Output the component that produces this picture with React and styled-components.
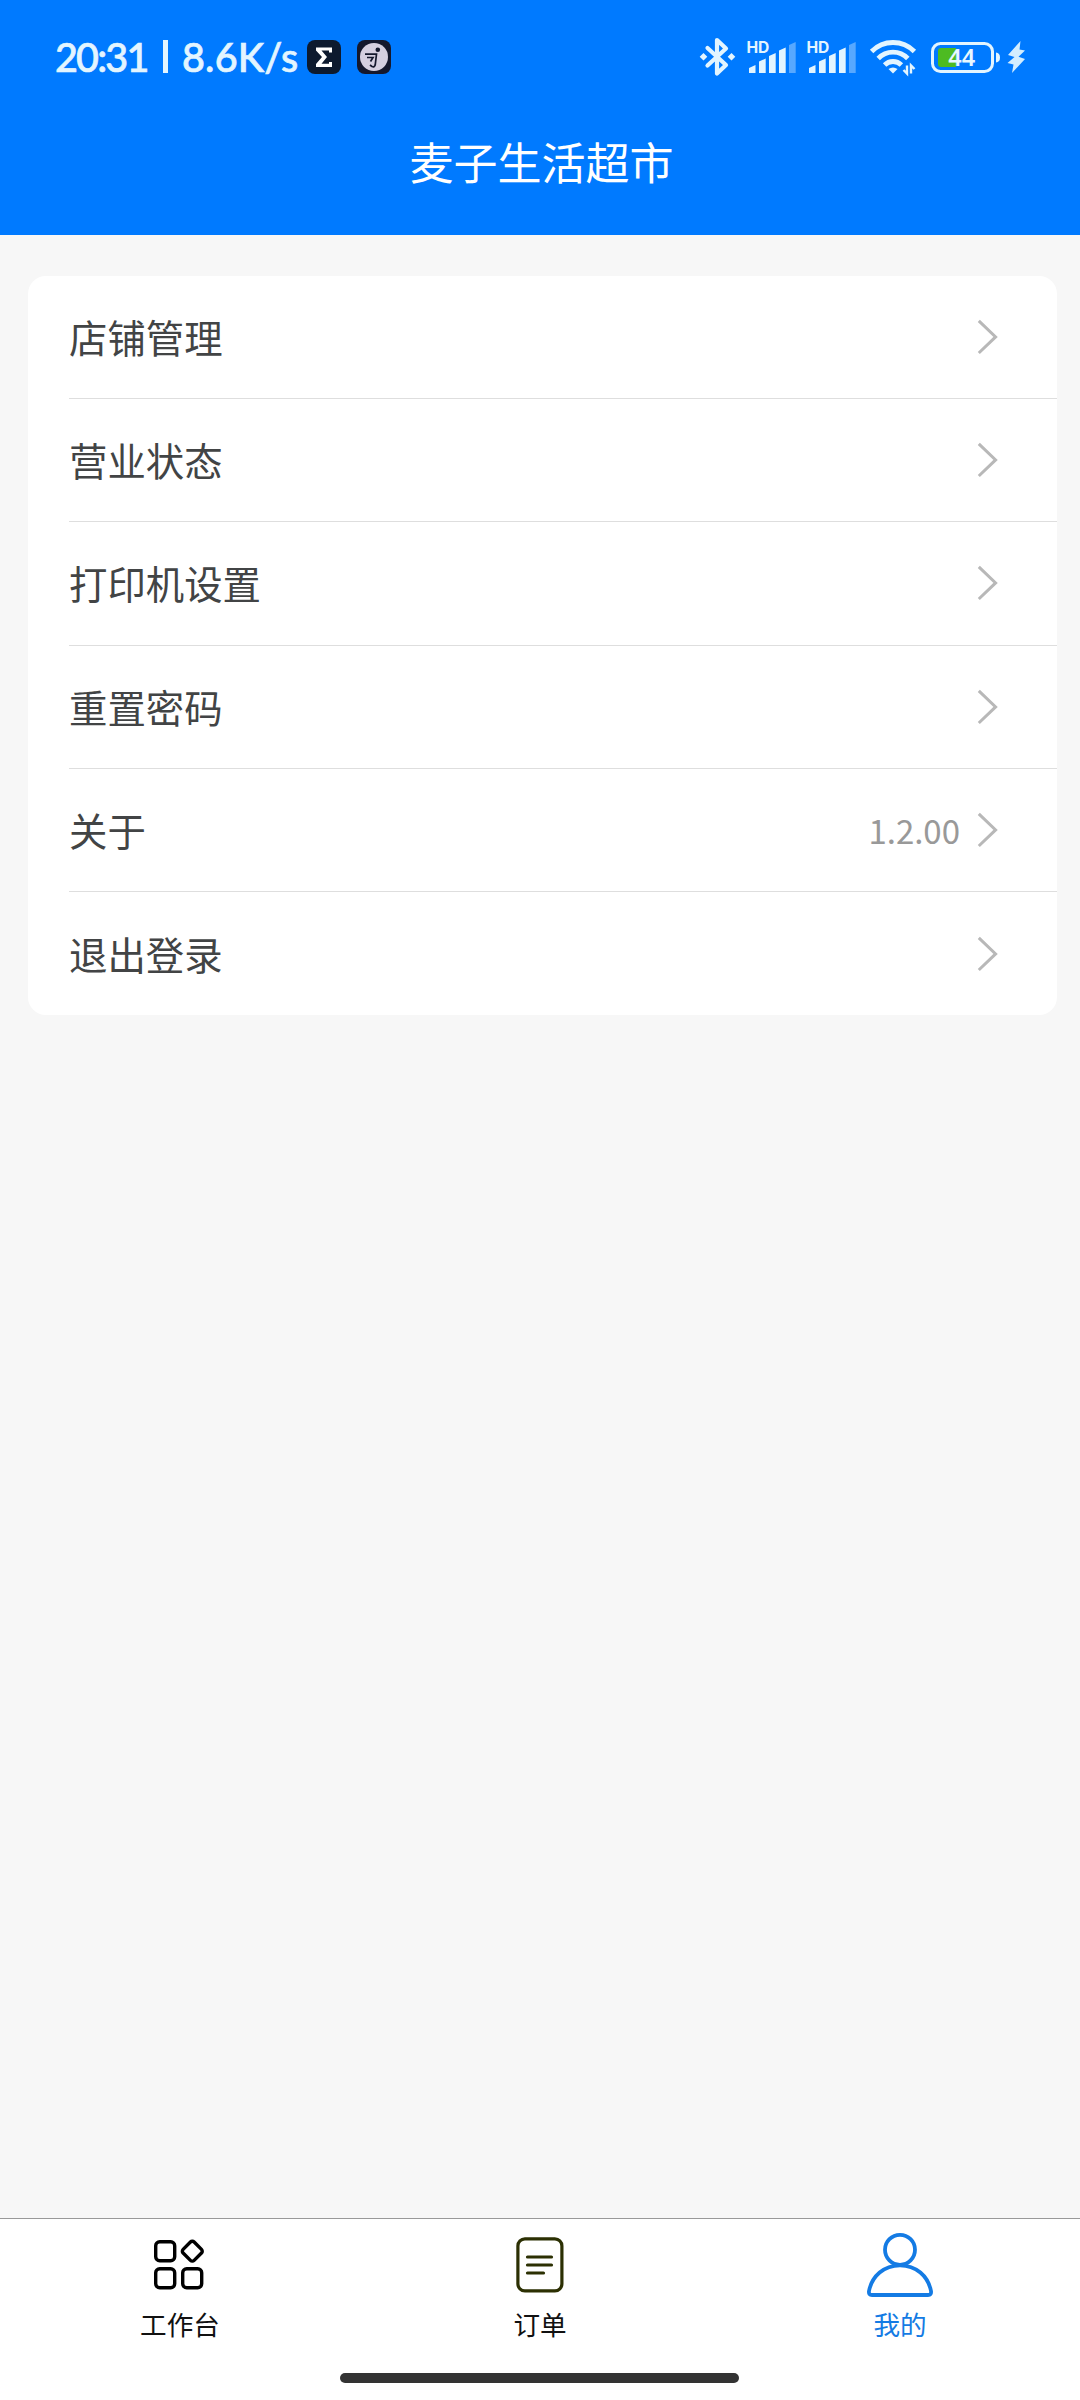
import React, { useState } from 'react'
import styled, { createGlobalStyle } from 'styled-components'

const menu = [
  { id: 1, text: '店铺管理' },
  { id: 2, text: '营业状态' },
  { id: 3, text: '打印机设置' },
  { id: 4, text: '重置密码' },
  { id: 5, text: '关于', value: '1.2.00' },
  { id: 6, text: '退出登录' },
]

const BluetoothIcon = () => (
  <svg width="36" height="40" viewBox="0 0 36 40" fill="none">
    <path
      d="M8.5 11 L27 28 L18 36.5 V3 L27 11.5 L8.5 28.5"
      stroke="#e3f5ff"
      strokeWidth="4.2"
      strokeLinejoin="round"
      strokeLinecap="round"
    />
    <path d="M4.5 16 l3.8 3.8 -3.8 3.8 -3.8 -3.8z M32.5 16 l3.8 3.8 -3.8 3.8 -3.8 -3.8z" fill="#e3f5ff" />
  </svg>
)

const SignalIcon = () => (
  <svg width="50" height="34" viewBox="0 0 50 34" fill="#e3f5ff">
    <text x="-0.6" y="13" fontFamily="Inter, sans-serif" fontWeight="700" fontSize="15.6">HD</text>
    <path d="M2 33 V28 L8.5 25 V33z M12 33 V21.5 L18.7 18.5 V33z M22 33 V16 L28.7 13 V33z M32 33 V10.5 L38.7 7.5 V33z" />
    <path d="M42 33 V5 L48.7 2 V33z" fill="#57a8ff" />
  </svg>
)

const WifiIcon = () => (
  <svg width="47" height="36" viewBox="0 0 47 36" fill="none" stroke="#e3f5ff" strokeWidth="4.8">
    <path d="M1.6 12.5 A30 30 0 0 1 44.4 12.5" />
    <path d="M8.2 19.5 A20.5 20.5 0 0 1 37.8 19.5" />
    <path d="M14.6 26 A11.8 11.8 0 0 1 31.4 26" />
    <path d="M18.5 30 Q23 27 27.5 30 L23 34.5z" fill="#e3f5ff" stroke="none" />
    <path d="M37 26.5 V34.5 L33.5 31 M41 34.5 V26.5 L44.5 30" strokeWidth="2.4" />
  </svg>
)

const BatteryIcon = () => (
  <svg width="69" height="31" viewBox="0 0 69 31">
    <rect x="1.5" y="1.5" width="60" height="28" rx="8" fill="none" stroke="#e3f5ff" strokeWidth="3" />
    <path d="M10 6 H25 V25 H10 Q7 25 7 22 V9 Q7 6 10 6z" fill="#4dbb22" />
    <path d="M65 10.5 Q69 11 69 15.5 Q69 20 65 20.5z" fill="#e3f5ff" />
    <text x="17.2" y="23.8" fontFamily="'Noto Sans', sans-serif" fontWeight="600" fontSize="23.5" fill="#e8f8ff">44</text>
  </svg>
)

const BoltIcon = () => (
  <svg width="19" height="32" viewBox="0 0 19 32" fill="#d2edff">
    <path d="M13.5 0 L1 14 L7.5 16 L0.5 22 L6.5 23.5 L5 32 L18 18 L11.5 15.8 L18 9.5 L12.5 8.5z" />
  </svg>
)

const SigmaApp = () => (
  <svg width="34" height="34" viewBox="0 0 34 34">
    <rect width="34" height="34" rx="8" fill="#0d1a2e" />
    <path d="M9 7.5 H25 V12.5 H22 V10.6 H14.5 L20 17 L14.5 23.8 H22 V22 H25 V27 H9 V24 L15 17 L9 10.5z" fill="#fff" />
  </svg>
)

const RunnerApp = () => (
  <svg width="34" height="34" viewBox="0 0 34 34">
    <rect width="34" height="34" rx="8" fill="#15182c" />
    <circle cx="17" cy="17" r="14" fill="#d5cfdf" />
    <circle cx="20.8" cy="9.8" r="2.3" fill="#15182c" />
    <path d="M8 14.2 H19.5 L18.2 25 Q17.5 27.5 15 26.5 L13 25 M10 17.5 H16 L13.5 21.5" fill="none" stroke="#15182c" strokeWidth="1.7" />
  </svg>
)

const Arrow = () => (
  <svg width="20" height="36" viewBox="0 0 20 36" fill="none">
    <path d="M0.8 1.8 L17.6 17.9 L0.8 34" stroke="#b8b8b8" strokeWidth="3" />
  </svg>
)

const WorkIcon = () => (
  <svg width="52" height="50" viewBox="0 0 52 50" fill="none" stroke="currentColor" strokeWidth="3.4">
    <rect x="1.7" y="1.7" width="19" height="19" rx="4" />
    <rect x="1.7" y="28.7" width="19" height="19" rx="4" />
    <rect x="28.7" y="28.7" width="19" height="19" rx="4" />
    <rect x="30.5" y="3.4" width="15.6" height="15.6" rx="2.6" transform="rotate(45 38.3 11.2)" />
  </svg>
)

const OrderIcon = () => (
  <svg width="48" height="56" viewBox="0 0 48 56" fill="none" stroke="#2c3003" strokeWidth="3.2" strokeLinecap="round">
    <rect x="1.9" y="1.9" width="44" height="52" rx="7" />
    <path d="M11.5 20 H35.5 M11.5 28 H35.5 M11.5 36 H27.5" />
  </svg>
)

const MineIcon = () => (
  <svg width="66" height="66" viewBox="0 0 66 66" fill="none" stroke="#147be4" strokeWidth="3.8">
    <circle cx="33" cy="17.8" r="15" />
    <path d="M2 59 C5 44 17 33.3 33 33.3 C49 33.3 61 44 64 59 Q64.6 63 61 63 H5 Q1.4 63 2 59z" />
  </svg>
)

const tabs = [
  { id: 'work', text: '工作台', icon: <WorkIcon /> },
  { id: 'order', text: '订单', icon: <OrderIcon /> },
  { id: 'mine', text: '我的', icon: <MineIcon /> },
]

const App = () => {
  const [tab, setTab] = useState('mine')

  return (
    <Page>
      <GlobalStyle />
      <Header>
        <StatusBar>
          <Clock>20:31</Clock>
          <Split />
          <Speed>8.6K/s</Speed>
          <Apps>
            <SigmaApp />
            <RunnerApp />
          </Apps>
          <System>
            <BluetoothIcon />
            <Signals>
              <SignalIcon />
              <SignalIcon />
            </Signals>
            <WifiIcon />
            <Power>
              <BatteryIcon />
              <BoltIcon />
            </Power>
          </System>
        </StatusBar>
        <Title>麦子生活超市</Title>
      </Header>

      <Content>
        <Card>
          {menu.map(({ id, text, value }) => (
            <Row key={id}>
              <Label>{text}</Label>
              {value && <Value>{value}</Value>}
              <Arrow />
            </Row>
          ))}
        </Card>
      </Content>

      <Footer>
        <TabBar>
          {tabs.map(({ id, text, icon }) => (
            <Tab key={id} $active={tab === id} onClick={() => setTab(id)}>
              <IconBox>{icon}</IconBox>
              <span>{text}</span>
            </Tab>
          ))}
        </TabBar>
        <HomeLine />
      </Footer>
    </Page>
  )
}

const GlobalStyle = createGlobalStyle`
  * {
    box-sizing: border-box;
  }
  body {
    margin: 0;
    font-family: 'Noto Sans CJK SC', sans-serif;
  }
  svg {
    display: block;
    flex-shrink: 0;
    overflow: visible;
  }
`

const Page = styled.div`
  width: 1080px;
  height: 2400px;
  display: flex;
  flex-direction: column;
  background: #f7f7f7;
`

const Header = styled.header`
  height: 235px;
  background: #007aff;
`

const StatusBar = styled.div`
  height: 114px;
  padding: 0 54px 0 55px;
  display: flex;
  align-items: center;
  color: #e3f5ff;
  font-family: Lato, sans-serif;
  font-size: 39.5px;
  font-weight: 500;
  line-height: 48px;
`

const Clock = styled.span`
  width: 108px;
  padding-bottom: 1px;
  letter-spacing: -1.8px;
  -webkit-text-stroke: 0.7px #e3f5ff;
`

const Split = styled.i`
  width: 5px;
  height: 33px;
  margin-bottom: 2px;
  background: #e3f5ff;
`

const Speed = styled.span`
  width: 139px;
  padding: 0 0 1px 14px;
  letter-spacing: 0.2px;
  -webkit-text-stroke: 0.7px #e3f5ff;
`

const Apps = styled.div`
  display: flex;
  gap: 16px;
`

const System = styled.div`
  display: flex;
  align-items: center;
  margin-left: auto;
`

const Signals = styled.div`
  display: flex;
  gap: 10px;
  margin: 0 13px 0 12px;
`

const Power = styled.div`
  display: flex;
  align-items: center;
  gap: 7px;
  margin-left: 14px;
`

const Title = styled.h1`
  margin: 15px 0 0;
  padding-left: 3px;
  color: #fff;
  font-size: 44px;
  font-weight: 400;
  line-height: 64px;
  text-align: center;
`

const Content = styled.main`
  flex: 1;
  padding: 41px 23px 0 28px;
`

const Card = styled.ul`
  margin: 0;
  padding: 0 0 0 41px;
  list-style: none;
  background: #fff;
  border-radius: 18px;
`

const Row = styled.li`
  height: 123.2px;
  padding-right: 59px;
  display: flex;
  align-items: center;
  &:not(:last-child) {
    border-bottom: 1px solid #dedede;
  }
`

const Label = styled.span`
  flex: 1;
  padding-bottom: 2px;
  color: #424445;
  font-size: 38.4px;
`

const Value = styled.span`
  margin-right: 18px;
  color: #999;
  font-size: 33px;
`

const Footer = styled.footer`
  height: 182px;
  border-top: 1px solid #999;
  background: #fff;
`

const TabBar = styled.nav`
  display: grid;
  grid-template-columns: repeat(3, 1fr);
`

const Tab = styled.div`
  display: flex;
  flex-direction: column;
  align-items: center;
  color: ${(props) => (props.$active ? '#147be4' : '#111')};
  font-size: 26.6px;
  line-height: 39px;
`

const IconBox = styled.div`
  height: 85px;
  padding: 7px 1px 0 0;
  display: flex;
  align-items: center;
  color: #000;
`

const HomeLine = styled.div`
  width: 399px;
  height: 10px;
  margin: 30px 0 0 340px;
  border-radius: 5px;
  background: #333;
`

export default App
